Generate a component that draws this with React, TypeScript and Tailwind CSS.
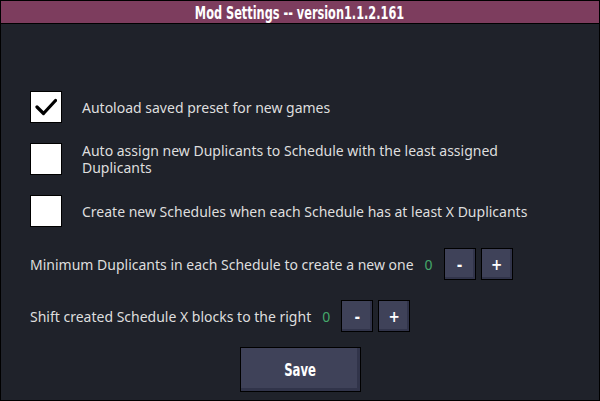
import React from "react";

const titleFont = {
  fontFamily: '"DejaVu Sans Condensed", "Liberation Sans Narrow", "Liberation Sans", sans-serif',
};

function Checkbox({ checked }: { checked?: boolean }) {
  return (
    <div className="w-[32px] h-[32px] shrink-0 bg-white border border-black flex items-center justify-center">
      {checked && (
        <svg width="22" height="18" viewBox="0 0 22 18">
          <path d="M2 9 L8.5 15.5 L20.5 2.5" fill="none" stroke="#000" strokeWidth="3.2" strokeLinecap="round" strokeLinejoin="round" />
        </svg>
      )}
    </div>
  );
}

function StepButton({ label }: { label: string }) {
  return (
    <div
      className="w-[32px] h-[32px] shrink-0 border border-black bg-[#3f4259] shadow-[inset_-2px_-2px_0_#31344a] flex items-center justify-center pt-[2px] text-white font-bold text-[15px] leading-none"
      style={titleFont}
    >
      {label}
    </div>
  );
}

export default function App() {
  return (
    <div
      className="w-[600px] h-[401px] border border-black bg-[#1f222a] flex flex-col text-[#dedede]"
      style={{ fontFamily: '"Noto Sans", "Open Sans", sans-serif' }}
    >
      <div className="h-[23px] shrink-0 bg-[#7d3d5e] border-b border-black flex items-center justify-center">
        <span
          className="inline-block whitespace-nowrap text-white font-bold text-[18px] leading-none scale-x-[0.7] pt-[1px]"
          style={titleFont}
        >
          Mod Settings -- version1.1.2.161
        </span>
      </div>
      <div className="flex flex-col pl-[29px] pt-[67px]">
        <div className="flex items-center gap-[20px] h-[32px]">
          <Checkbox checked />
          <span className="text-[14px] leading-[17px]">Autoload saved preset for new games</span>
        </div>
        <div className="flex items-center gap-[20px] h-[32px] mt-[20px]">
          <Checkbox />
          <span className="text-[14px] leading-[17px] w-[460px]">
            Auto assign new Duplicants to Schedule with the least assigned Duplicants
          </span>
        </div>
        <div className="flex items-center gap-[20px] h-[32px] mt-[20px]">
          <Checkbox />
          <span className="text-[14px] leading-[17px]">Create new Schedules when each Schedule has at least X Duplicants</span>
        </div>
        <div className="flex items-center h-[32px] mt-[21px]">
          <span className="text-[14px] leading-[17px]">Minimum Duplicants in each Schedule to create a new one</span>
          <span className="text-[14px] leading-[17px] text-[#45a86a] ml-[11px] mr-[11px]">0</span>
          <StepButton label="-" />
          <div className="w-[5px]" />
          <StepButton label="+" />
        </div>
        <div className="flex items-center h-[32px] mt-[20px]">
          <span className="text-[14px] leading-[17px]">Shift created Schedule X blocks to the right</span>
          <span className="text-[14px] leading-[17px] text-[#45a86a] ml-[11px] mr-[11px]">0</span>
          <StepButton label="-" />
          <div className="w-[5px]" />
          <StepButton label="+" />
        </div>
      </div>
      <div className="flex justify-center mt-[15px]">
        <div className="w-[121px] h-[45px] border border-black bg-[#3f4259] shadow-[inset_-3px_-3px_0_#31344a] flex items-center justify-center">
          <span
            className="inline-block text-white font-bold text-[18px] leading-none scale-x-[0.72] pt-[1px]"
            style={titleFont}
          >
            Save
          </span>
        </div>
      </div>
    </div>
  );
}
